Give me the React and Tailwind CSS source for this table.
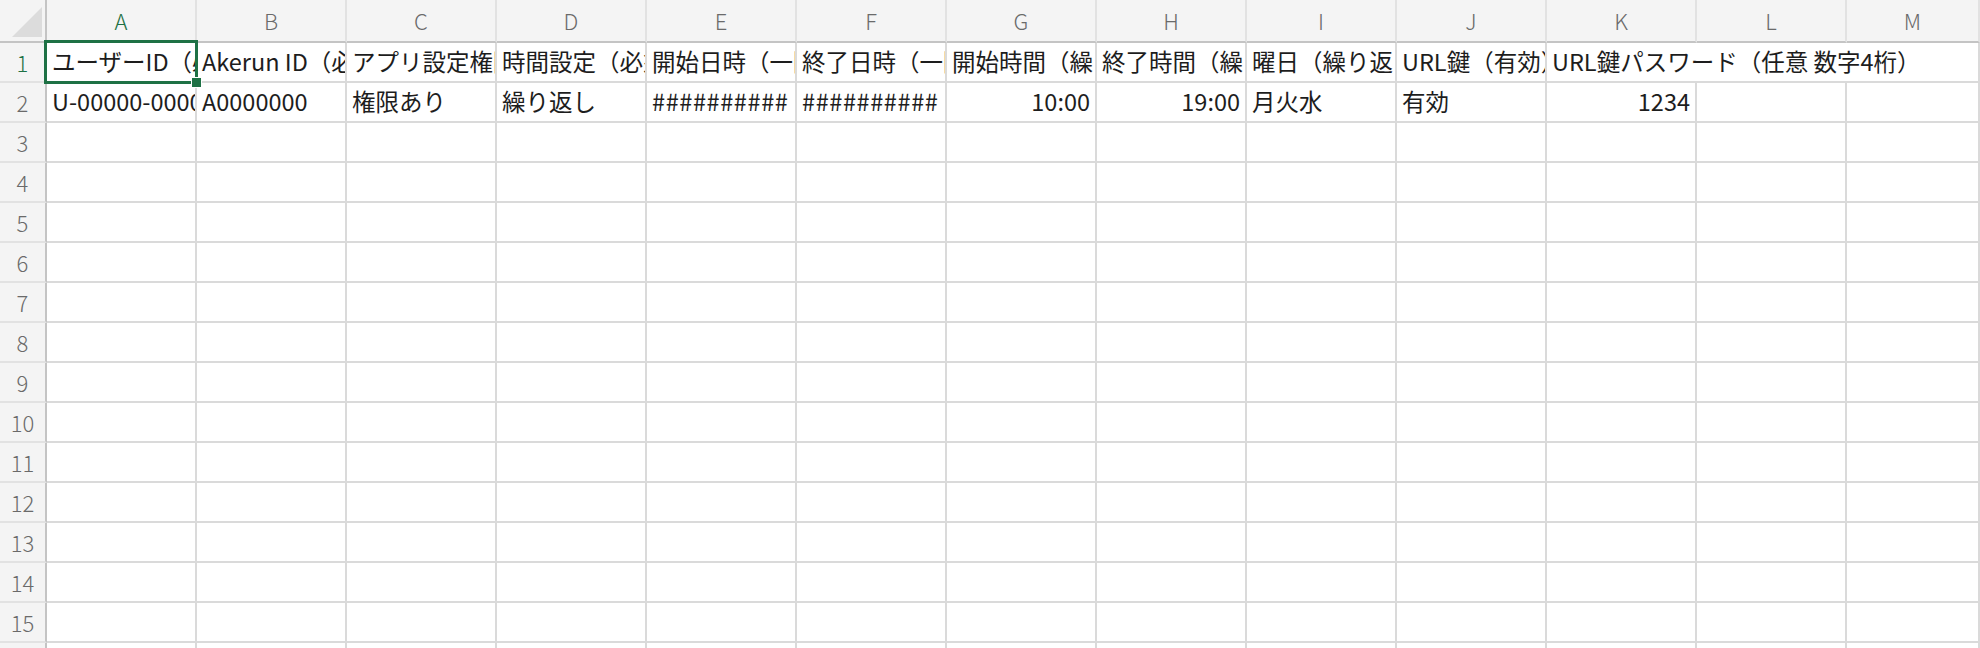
import React from "react";

const letters = ["A", "B", "C", "D", "E", "F", "G", "H", "I", "J", "K", "L", "M"];

const row1 = [
  "ユーザーID（必須）",
  "Akerun ID（必須）",
  "アプリ設定権限",
  "時間設定（必須）",
  "開始日時（一回のみ）",
  "終了日時（一回のみ）",
  "開始時間（繰り返し）",
  "終了時間（繰り返し）",
  "曜日（繰り返し）",
  "URL鍵（有効）",
];

const row2 = [
  { v: "U-00000-00000" },
  { v: "A0000000" },
  { v: "権限あり" },
  { v: "繰り返し" },
  { v: "##########", hash: true },
  { v: "##########", hash: true },
  { v: "10:00", right: true },
  { v: "19:00", right: true },
  { v: "月火水" },
  { v: "有効" },
  { v: "1234", right: true },
  { v: "" },
  { v: "" },
];

const cell =
  "h-[40px] border-r-2 border-b-2 border-[#dadada] overflow-hidden whitespace-nowrap flex items-center px-[5px] text-[23.5px] text-[#1d1d1d]";

const rowHead =
  "h-[40px] bg-[#f4f4f4] border-r-2 border-b-2 border-r-[#c4c4c4] border-b-[#e2e2e2] flex items-center justify-center text-[22px] font-light";

const App = () => {
  return (
    <div className="relative w-[1980px] h-[648px] overflow-hidden bg-white font-['Noto_Sans_CJK_JP',sans-serif]">
      <div className="grid grid-cols-[47px_repeat(12,150px)_1fr]">
        {/* corner */}
        <div className="h-[43px] bg-[#f4f4f4] border-r-2 border-b-2 border-[#c4c4c4] flex items-end justify-end pr-[3px] pb-[4px]">
          <svg width="30" height="30" viewBox="0 0 30 30">
            <polygon points="30,0 30,30 0,30" fill="#dcdcdc" />
          </svg>
        </div>
        {letters.map((l) => (
          <div
            key={l}
            className={`h-[43px] bg-[#f4f4f4] border-r-2 border-b-2 border-r-[#e2e2e2] border-b-[#c4c4c4] flex items-center justify-center text-[22px] font-light ${
              l === "A" ? "text-[#1e7145]" : "text-[#6a6a6a]"
            }`}
          >
            {l}
          </div>
        ))}

        {/* row 1 */}
        <div className={`${rowHead} text-[#1e7145]`}>1</div>
        {row1.map((t, i) => (
          <div key={i} className={cell}>
            {t}
          </div>
        ))}
        <div className={`${cell} col-span-3`}>URL鍵パスワード（任意 数字4桁）</div>

        {/* row 2 */}
        <div className={`${rowHead} text-[#6a6a6a]`}>2</div>
        {row2.map((c, i) => (
          <div
            key={i}
            className={`${cell} ${c.right ? "justify-end" : ""} ${c.hash ? "tracking-[0.6px]" : ""}`}
          >
            {c.v}
          </div>
        ))}

        {/* empty rows */}
        {Array.from({ length: 14 }, (_, r) => (
          <React.Fragment key={r}>
            <div className={`${rowHead} text-[#6a6a6a]`}>{r + 3}</div>
            {letters.map((l) => (
              <div key={l} className={cell}></div>
            ))}
          </React.Fragment>
        ))}
      </div>

      {/* selection */}
      <div className="absolute left-[44px] top-[40px] w-[154px] h-[44px] border-[3px] border-[#1e7145]"></div>
      <div className="absolute left-[191px] top-[77px] w-[11px] h-[11px] bg-[#1e7145] border border-white"></div>
    </div>
  );
};

export default App;
